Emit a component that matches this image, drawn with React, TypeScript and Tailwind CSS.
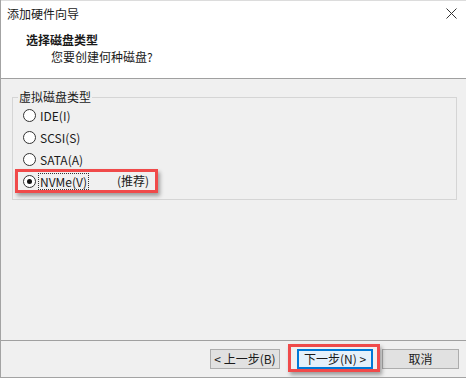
import React, { useState } from "react";

const font = { fontFamily: '"Noto Sans CJK SC", "Noto Sans", sans-serif' };

const options = [
  { value: "ide", label: "IDE(I)" },
  { value: "scsi", label: "SCSI(S)" },
  { value: "sata", label: "SATA(A)" },
  { value: "nvme", label: "NVMe(V)" },
];

const Radio: React.FC<{ checked: boolean }> = ({ checked }) => (
  <span className="w-[13px] h-[13px] rounded-full border border-[#333333] bg-white flex items-center justify-center shrink-0">
    {checked && <span className="w-[5px] h-[5px] rounded-full bg-[#111111]" />}
  </span>
);

const App: React.FC = () => {
  const [selected, setSelected] = useState("nvme");

  return (
    <div
      className="w-[466px] h-[378px] flex flex-col bg-[#f0f0f0] border-l border-b border-[#a3a3a3] text-[12px] text-[#1a1a1a] overflow-hidden"
      style={font}
    >
      {/* header */}
      <div className="h-[79px] bg-white border-b border-[#a0a0a0] flex flex-col shrink-0">
        <div className="h-[26px] flex items-center justify-between pl-[6px] pr-[8px] border-t border-[#dcdcdc]">
          <span className="leading-none">添加硬件向导</span>
          <svg width="11" height="11" viewBox="0 0 11 11" className="mr-[1px]">
            <path d="M0.5 0.5 L10.5 10.5 M10.5 0.5 L0.5 10.5" stroke="#333" strokeWidth="1" />
          </svg>
        </div>
        <div className="pl-[25px] pt-[6px] font-bold leading-[16px]">选择磁盘类型</div>
        <div className="pl-[50px] leading-[16px] mt-[1px]">您要创建何种磁盘?</div>
      </div>

      {/* content */}
      <div className="flex-1 flex flex-col pt-[18px] pl-[11px] pr-[9px]">
        <div className="relative border border-[#d5d5d5] h-[103px] pt-[6px] pl-[10px]">
          <span className="absolute -top-[9px] left-[5px] px-[1px] bg-[#f0f0f0] leading-[16px]">虚拟磁盘类型</span>
          <div className="flex flex-col gap-[6px] pt-[3px]">
            {options.map((o) => (
              <label
                key={o.value}
                className="flex items-center gap-[2px] h-[16px] cursor-pointer whitespace-nowrap"
                onClick={() => setSelected(o.value)}
              >
                <Radio checked={selected === o.value} />
                <span
                  className={
                    selected === o.value
                      ? "leading-[15px] px-[1px] border border-dotted border-[#333]"
                      : "leading-[15px] px-[1px] border border-transparent"
                  }
                >
                  {o.label}
                </span>
                {o.value === "nvme" && <span className="ml-[26px] leading-none">(推荐)</span>}
              </label>
            ))}
          </div>
          {/* annotation */}
          <div className="absolute left-[2px] top-[71px] w-[143px] h-[24px] border-[3px] border-[#f04a4a] shadow-[2px_3px_4px_rgba(0,0,0,0.35)] pointer-events-none" />
        </div>
      </div>

      {/* footer */}
      <div className="h-[37px] border-t border-[#a0a0a0] flex items-start justify-end pt-[8px] pr-[7px] shrink-0">
        <button className="w-[70px] h-[20px] bg-[#e1e1e1] border border-[#adadad] leading-none">&lt; 上一步(B)</button>
        <div className="relative ml-[17px]">
          <button className="w-[76px] h-[20px] bg-[#e5f1fb] border-2 border-[#0078d7] leading-none">下一步(N) &gt;</button>
          <div className="absolute -left-[9px] -top-[5px] w-[92px] h-[28px] border-[3px] border-[#f04a4a] shadow-[2px_3px_4px_rgba(0,0,0,0.35)] pointer-events-none" />
        </div>
        <button className="ml-[9px] w-[77px] h-[20px] bg-[#e1e1e1] border border-[#adadad] leading-none">取消</button>
      </div>
    </div>
  );
};

export default App;
